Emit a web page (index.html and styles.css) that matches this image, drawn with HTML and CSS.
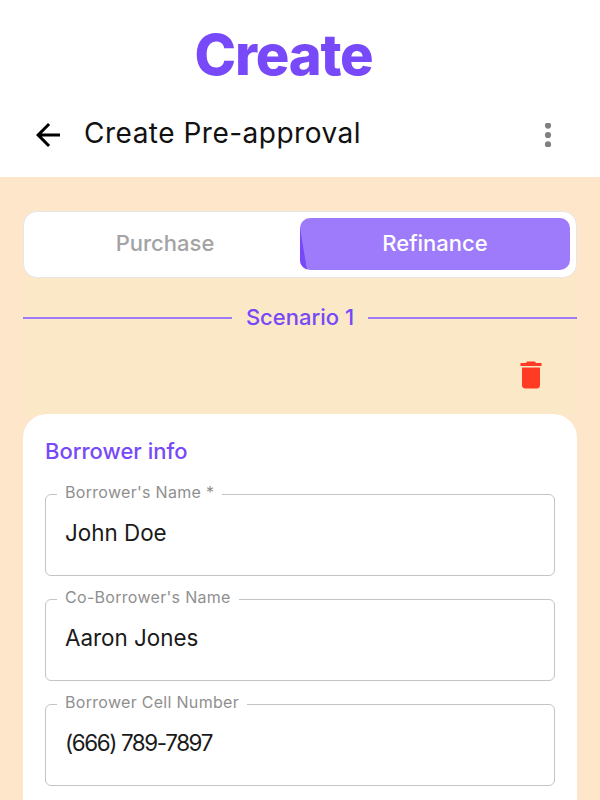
FILE: index.html
```html
<!DOCTYPE html>
<html lang="en">
<head>
  <meta charset="UTF-8" />
  <title>Create Pre-approval</title>
  <link rel="stylesheet" href="styles.css">
</head>
<body>
  <div class="page">
    <h1 class="brand">Create</h1>

    <div class="appbar">
      <svg class="back" width="36" height="36" viewBox="0 0 24 24"><path d="M20 11H7.83l5.59-5.59L12 4l-8 8 8 8 1.41-1.41L7.83 13H20v-2z"/></svg>
      <span class="appbar-title">Create Pre-approval</span>
      <svg class="more" width="24" height="24" viewBox="0 0 24 24"><circle cx="12" cy="2.6" r="3.1"/><circle cx="12" cy="12" r="3.1"/><circle cx="12" cy="21.4" r="3.1"/></svg>
    </div>

    <div class="content">
      <div class="toggle">
        <div class="toggle-item">Purchase</div>
        <div class="toggle-item active">Refinance</div>
      </div>

      <div class="scenario-wrap">
        <div class="divider">
          <span class="divider-line"></span>
          <span class="divider-text">Scenario 1</span>
          <span class="divider-line"></span>
        </div>

        <div class="delete-row">
          <svg class="trash" width="36" height="36" viewBox="0 0 24 24"><path d="M6 19c0 1.1.9 2 2 2h8c1.1 0 2-.9 2-2V7H6v12zM19 4h-3.5l-1-1h-5l-1 1H5v2h14V4z"/></svg>
        </div>
      </div>

      <div class="card">
        <h2 class="card-title">Borrower info</h2>

        <fieldset class="field">
          <legend>Borrower's Name *</legend>
          <div class="field-value">John Doe</div>
        </fieldset>
        <fieldset class="field">
          <legend>Co-Borrower's Name</legend>
          <div class="field-value">Aaron Jones</div>
        </fieldset>
        <fieldset class="field">
          <legend>Borrower Cell Number</legend>
          <div class="field-value phone">(666) 789-7897</div>
        </fieldset>
      </div>
    </div>
  </div>
</body>
</html>
```
FILE: styles.css
```css
html, body {
  margin: 0;
  height: 100%;
}
body {
  font-family: "Inter", "Liberation Sans", sans-serif;
  background-color: #fde6c9;
  overflow: hidden;
}
.page {
  height: 800px;
  overflow: hidden;
}
.brand {
  margin: 0;
  height: 110px;
  background: #fff;
  color: #7749f8;
  font-size: 56px;
  font-weight: 800;
  letter-spacing: -1.2px;
  line-height: 110px;
  text-align: center;
  padding-right: 33px;
  box-sizing: border-box;
}
.appbar {
  display: flex;
  align-items: center;
  height: 67px;
  padding: 0 40px 17px 30px;
  box-sizing: border-box;
  background: #fff;
}
.back {
  fill: #000;
  margin-right: 18px;
  flex: none;
}
.appbar-title {
  flex: 1;
  font-size: 28px;
  letter-spacing: 0.5px;
  line-height: 32px;
  padding-bottom: 4px;
  color: #111;
}
.more {
  fill: #808080;
}
.content {
  padding: 34px 23px 0;
}
.toggle {
  display: flex;
  height: 67px;
  padding: 6px 6px 7px;
  box-sizing: border-box;
  background: #fff;
  border: 1px solid #e6e6e6;
  border-radius: 14px;
}
.toggle-item {
  flex: 1;
  display: flex;
  align-items: center;
  justify-content: center;
  padding-bottom: 2px;
  font-size: 22px;
  font-weight: 500;
  color: #a3a3a3;
}
.toggle-item.active {
  position: relative;
  overflow: hidden;
  background: #9e7bfa;
  color: #fff;
  border-radius: 10px;
}
.toggle-item.active::before {
  content: "";
  position: absolute;
  left: 0;
  bottom: 0;
  width: 7px;
  height: 42px;
  background: #7749f8;
  clip-path: polygon(0 0, 100% 100%, 0 100%);
}
.scenario-wrap {
  background: #fbe8c7;
  height: 136px;
  padding-top: 24px;
  box-sizing: border-box;
}
.divider {
  display: flex;
  align-items: center;
  gap: 14px;
  height: 30px;
}
.divider-line {
  flex: 1;
  height: 2px;
  margin-top: 1px;
  background: #9e7bfa;
}
.divider-text {
  font-size: 22px;
  font-weight: 500;
  color: #7749f8;
}
.delete-row {
  display: flex;
  justify-content: flex-end;
  padding: 25px 28px 0 0;
}
.trash {
  fill: #ff3b24;
}
.card {
  background: #fff;
  border-radius: 24px 24px 0 0;
  padding: 22px 22px 0;
  height: 420px;
}
.card-title {
  margin: 0 0 16px;
  font-size: 22px;
  line-height: 30px;
  font-weight: 500;
  color: #7749f8;
}
.field {
  margin: 0 0 11px;
  padding: 0 19px;
  height: 94px;
  box-sizing: border-box;
  border: 1px solid #c4c4c4;
  border-radius: 6px;
}
.field legend {
  padding: 0 8px 4px;
  margin-left: -8px;
  font-size: 16px;
  letter-spacing: 0.3px;
  line-height: 20px;
  color: #8f8f8f;
}
.field-value {
  font-size: 22.4px;
  color: #1a1a1a;
  line-height: 29px;
  padding-top: 12px;
}
.field-value.phone {
  letter-spacing: -1.4px;
}
```
